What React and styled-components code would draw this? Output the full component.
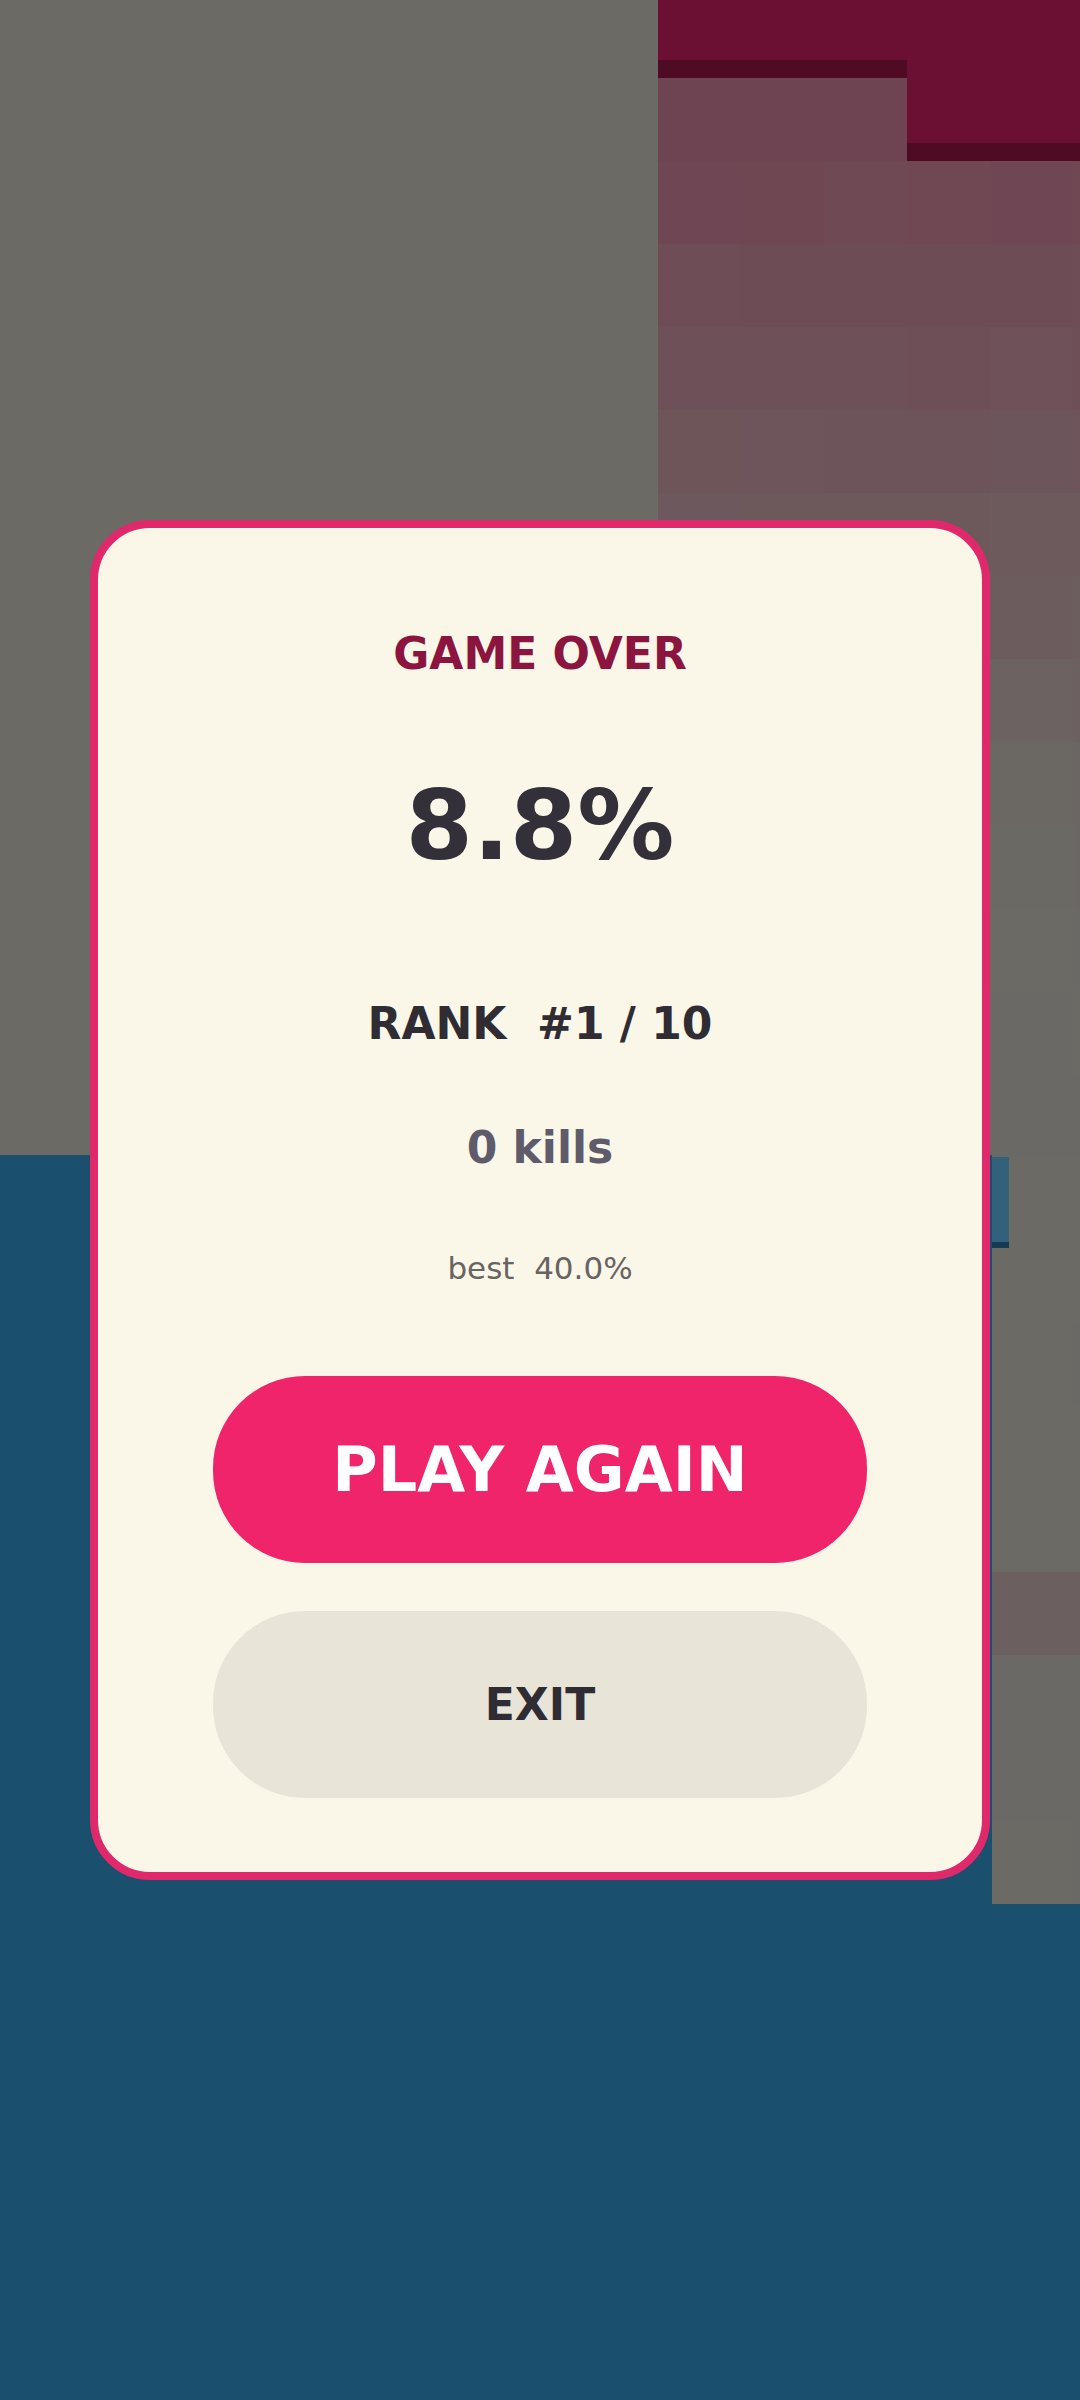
import React from 'react'
import styled, { createGlobalStyle } from 'styled-components'

const GlobalStyle = createGlobalStyle`
  html, body {
    margin: 0;
    padding: 0;
    background: #1b4f6e;
  }
  * { box-sizing: border-box; }
`

const Screen = styled.div`
  position: relative;
  width: 1080px;
  height: 2400px;
  overflow: hidden;
  font-family: "DejaVu Sans", "Liberation Sans", sans-serif;
`

const Board = styled.svg`
  position: absolute;
  inset: 0;
  display: block;
`

const Overlay = styled.div`
  position: absolute;
  inset: 0;
  display: flex;
  align-items: center;
  justify-content: center;
`

const Card = styled.div`
  width: 900px;
  height: 1360px;
  background: #fbf7e8;
  border: 8px solid #e0296b;
  border-radius: 60px;
  display: flex;
  flex-direction: column;
  align-items: center;
  padding-top: 104px;
`

const Title = styled.div`
  font-size: 44px;
  line-height: 1;
  font-weight: 700;
  color: #8c1540;
`

const Score = styled.div`
  margin-top: 101px;
  font-size: 97px;
  line-height: 1;
  font-weight: 700;
  color: #333039;
`

const Rank = styled.div`
  margin-top: 128px;
  font-size: 44px;
  line-height: 1;
  font-weight: 700;
  color: #2f2d33;
  white-space: pre;
`

const Kills = styled.div`
  margin-top: 80px;
  font-size: 44px;
  line-height: 1;
  font-weight: 700;
  color: #5f5b6a;
`

const Best = styled.div`
  margin-top: 83px;
  font-size: 31px;
  line-height: 1;
  color: #676462;
  white-space: pre;
`

const Actions = styled.div`
  margin-top: 92px;
  width: 654px;
  display: flex;
  flex-direction: column;
  gap: 48px;
`

const Button = styled.button`
  height: 187px;
  border: none;
  border-radius: 92px;
  display: flex;
  align-items: center;
  justify-content: center;
  font-family: inherit;
  font-weight: 700;
  line-height: 1;
  background: ${p => (p.$primary ? '#f0246b' : '#e8e4d7')};
  color: ${p => (p.$primary ? '#ffffff' : '#2f2d33')};
  font-size: ${p => (p.$primary ? '62px' : '44px')};
`

const GRAY = [107, 106, 101]
const TINT = [112, 60, 78]

const mix = t =>
  `rgb(${GRAY.map((g, i) => Math.round(g + (TINT[i] - g) * t)).join(',')})`

// territory cells fading from the crimson corner into the grey
const cells = []
for (let r = 0; r < 22; r++) {
  for (let c = 0; c < 6; c++) {
    const x = 658 + c * 83
    const y = 78 + r * 83
    if (y > 1155 && x + 83 <= 992) continue
    const seed = Math.sin(r * 12.9898 + c * 78.233) * 43758.5453
    const noise = (seed - Math.floor(seed)) * 0.06
    let t = Math.max(0, 1 - r / 8.5) * 0.82 + noise
    if (r > 9) t = noise * 0.3
    if (r === 18 && c >= 4) t = 0.25
    cells.push({ x, y, fill: mix(Math.min(1, t)) })
  }
}

const GameBoard = () => (
  <Board width="1080" height="2400" viewBox="0 0 1080 2400">
    <rect width="1080" height="2400" fill="#1b4f6e" />
    <rect x="0" y="0" width="1080" height="1155" fill="#6b6a65" />
    <rect x="992" y="1155" width="88" height="749" fill="#6b6a65" />
    <clipPath id="territory">
      <rect x="658" y="0" width="422" height="1155" />
      <rect x="992" y="1155" width="88" height="749" />
    </clipPath>
    <g clipPath="url(#territory)">
      {cells.map((cell, i) => (
        <rect key={i} x={cell.x} y={cell.y} width="83" height="83" fill={cell.fill} />
      ))}
    </g>
    <rect x="658" y="0" width="249" height="60" fill="#6b1032" />
    <rect x="658" y="60" width="249" height="18" fill="#4f0b24" />
    <rect x="907" y="0" width="173" height="143" fill="#6b1032" />
    <rect x="907" y="143" width="173" height="18" fill="#4f0b24" />
    <rect x="992" y="1157" width="17" height="85" fill="#33607a" />
    <rect x="992" y="1242" width="17" height="6" fill="#163a52" />
  </Board>
)

export default function App() {
  return (
    <Screen>
      <GlobalStyle />
      <GameBoard />
      <Overlay>
        <Card>
          <Title>GAME OVER</Title>
          <Score>8.8%</Score>
          <Rank>RANK  #1 / 10</Rank>
          <Kills>0 kills</Kills>
          <Best>best  40.0%</Best>
          <Actions>
            <Button $primary>PLAY AGAIN</Button>
            <Button>EXIT</Button>
          </Actions>
        </Card>
      </Overlay>
    </Screen>
  )
}
